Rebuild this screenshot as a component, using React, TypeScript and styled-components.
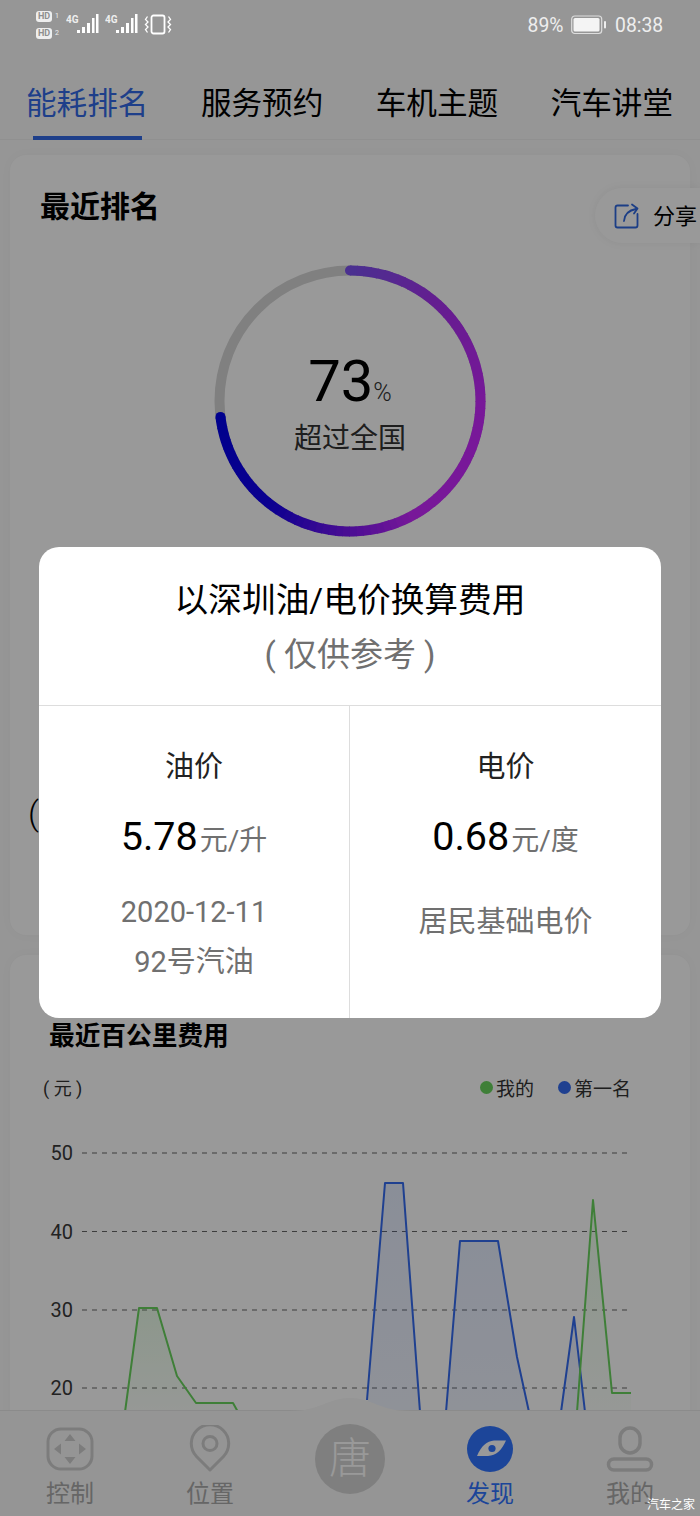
import React from 'react';
import styled, { createGlobalStyle } from 'styled-components';

const FONT = `Roboto, "Noto Sans CJK SC", sans-serif`;

const GlobalStyle = createGlobalStyle`
  html, body {
    margin: 0;
    padding: 0;
    background: #fafafa;
    font-family: ${FONT};
  }
`;

// ring colours, before the dialog backdrop darkens them
const RING_STOPS: [number, number[]][] = [
  [0, [125, 80, 240]],
  [40, [168, 50, 240]],
  [90, [200, 40, 255]],
  [150, [200, 40, 255]],
  [185, [110, 20, 245]],
  [215, [20, 0, 240]],
  [263, [0, 0, 235]],
];

function ringColor(deg: number) {
  for (let i = 1; i < RING_STOPS.length; i++) {
    const [a, ca] = RING_STOPS[i - 1];
    const [b, cb] = RING_STOPS[i];
    if (deg <= b) {
      const t = (deg - a) / (b - a);
      return `rgb(${ca.map((c, k) => Math.round(c + (cb[k] - c) * t)).join(',')})`;
    }
  }
  return 'rgb(0,0,235)';
}

function polar(deg: number) {
  const r = 130.5;
  const rad = ((deg - 90) * Math.PI) / 180;
  return `${(140 + r * Math.cos(rad)).toFixed(2)} ${(140 + r * Math.sin(rad)).toFixed(2)}`;
}

function Ring() {
  const segments = [];
  for (let d = 0; d < 263; d += 3) {
    const end = Math.min(d + 3.4, 263);
    segments.push(
      <path key={d} d={`M${polar(d)} A130.5 130.5 0 0 1 ${polar(end)}`} stroke={ringColor(d)} strokeWidth="10" fill="none" />
    );
  }
  return (
    <svg width="280" height="280" viewBox="0 0 280 280">
      <circle cx="140" cy="140" r="130.5" stroke="#d6d6d6" strokeWidth="10" fill="none" />
      {segments}
      <path d={`M${polar(0)} L${polar(0)}`} stroke={ringColor(0)} strokeWidth="10" strokeLinecap="round" />
      <path d={`M${polar(263)} L${polar(263)}`} stroke={ringColor(263)} strokeWidth="10" strokeLinecap="round" />
    </svg>
  );
}

function Signal() {
  return (
    <svg width="33" height="24" viewBox="0 0 33 24">
      <text x="0" y="10" fontSize="10" fontWeight="700" fill="#eee" fontFamily="Roboto, sans-serif">4G</text>
      <rect x="11" y="17" width="3" height="3" fill="#fff" />
      <rect x="16" y="14" width="3" height="6" fill="#fff" />
      <rect x="21" y="10" width="3" height="10" fill="#fff" />
      <rect x="26" y="5" width="2.5" height="15" fill="#fff" />
      <rect x="30" y="1" width="2.5" height="19" fill="#fff" />
    </svg>
  );
}

function Vibrate() {
  return (
    <svg width="28" height="22" viewBox="0 0 28 22" fill="none" stroke="#fff">
      <rect x="7.500" y="1.500" width="13" height="18" rx="2" strokeWidth="1.8" />
      <path d="M3.500 2.500 L1.500 5.500 L4 8 L1.500 10.500 L4 13 L1.500 15.500 L3.500 18.500" strokeWidth="1.3" />
      <path d="M24.500 2.500 L26.500 5.500 L24 8 L26.500 10.500 L24 13 L26.500 15.500 L24.500 18.500" strokeWidth="1.3" />
    </svg>
  );
}

function Battery() {
  return (
    <svg width="36" height="20" viewBox="0 0 36 20">
      <rect x="0.7" y="1" width="30" height="17.5" rx="3" fill="none" stroke="#ddd" strokeWidth="1.2" />
      <rect x="2.5" y="3" width="26" height="13.5" rx="1.5" fill="#f4f4f4" />
      <rect x="33" y="6" width="2" height="7.5" rx="1" fill="#eee" />
    </svg>
  );
}

function ShareIcon() {
  return (
    <svg width="26" height="26" viewBox="0 0 26 26" fill="none" stroke="#2f68e0" strokeWidth="1.8" strokeLinejoin="round" strokeLinecap="round">
      <path d="M14 2.500 H3.500 Q1.500 2.500 1.500 4.500 V22.500 Q1.500 24.500 3.500 24.500 H21.500 Q23.500 24.500 23.500 22.500 V11" />
      <path d="M10 18 C10.500 12 13.500 7.500 22 6" />
      <path d="M18 1.500 L23.500 5.500 L20 10.500" />
    </svg>
  );
}

function ControlIcon() {
  return (
    <svg width="48" height="44" viewBox="0 0 48 44">
      <rect x="2" y="2" width="44" height="40" rx="13" fill="none" stroke="#cfcfcf" strokeWidth="3" />
      <path d="M24 7 L29.500 14 H18.500 Z M24 37 L18.500 30 H29.500 Z M8 22 L15 16.500 V27.500 Z M40 22 L33 16.500 V27.500 Z" fill="#cfcfcf" />
    </svg>
  );
}

function PinIcon() {
  return (
    <svg width="42" height="48" viewBox="0 0 42 48" fill="none" stroke="#cfcfcf" strokeWidth="3">
      <path d="M21 45 L7.500 31.500 A18.700 18.700 0 1 1 34.500 31.500 Z" strokeLinejoin="round" />
      <circle cx="21" cy="18.500" r="7" />
    </svg>
  );
}

function DiscoverIcon() {
  return (
    <svg width="46" height="46" viewBox="0 0 46 46">
      <circle cx="23" cy="23" r="23" fill="#3074ff" />
      <path d="M10 30 C14 20 20 15 27 14.500 L39 14.500 C35 24 29 29.500 21 30 Z" fill="#fff" />
      <circle cx="25" cy="22.500" r="3.600" fill="#3074ff" />
    </svg>
  );
}

function MineIcon() {
  return (
    <svg width="48" height="46" viewBox="0 0 48 46" fill="none" stroke="#cfcfcf" strokeWidth="3.500">
      <rect x="14" y="2" width="20" height="25" rx="10" />
      <rect x="2.500" y="33" width="43" height="11" rx="5.500" />
    </svg>
  );
}

function Chart() {
  const grid = [
    { label: '50', y: 1153 },
    { label: '40', y: 1231.5 },
    { label: '30', y: 1310 },
    { label: '20', y: 1388 },
  ];
  return (
    <svg width="680" height="300" viewBox="10 1130 680 300">
      <defs>
        <linearGradient id="blueFill" x1="0" y1="0" x2="0" y2="1">
          <stop offset="0" stopColor="#346bf0" stopOpacity="0.12" />
          <stop offset="1" stopColor="#346bf0" stopOpacity="0.08" />
        </linearGradient>
        <linearGradient id="greenFill" x1="0" y1="0" x2="0" y2="1">
          <stop offset="0" stopColor="#69e661" stopOpacity="0.14" />
          <stop offset="1" stopColor="#69e661" stopOpacity="0.03" />
        </linearGradient>
      </defs>
      {grid.map(g => (
        <g key={g.label}>
          <text x="73" y={g.y + 7} textAnchor="end" fontSize="20" fill="#3a3a3a" fontFamily="Roboto, sans-serif">{g.label}</text>
          <line x1="82" x2="632" y1={g.y} y2={g.y} stroke="#666" strokeWidth="1" strokeDasharray="5 5" />
        </g>
      ))}
      <g fill="url(#blueFill)">
        <path d="M367 1412 L385 1183 H403 L420 1412 Z" />
        <path d="M446 1412 L460 1241 H498 L517 1357 L529 1412 Z" />
        <path d="M561 1412 L574 1317 L585 1412 Z" />
      </g>
      <g fill="url(#greenFill)">
        <path d="M125 1412 L139 1308 H157 L177 1376 L196 1403 H233 L238 1412 Z" />
        <path d="M577 1412 L593 1200 L612 1393 H631 V1412 Z" />
      </g>
      <g fill="none" strokeWidth="2" strokeLinejoin="round">
        <path d="M367 1400 L385 1183 H403 L420 1412 M446 1412 L460 1241 H498 L517 1357 L529 1412 M561 1412 L574 1317 L585 1412" stroke="#346bf0" />
        <path d="M125 1412 L139 1308 H157 L177 1376 L196 1403 H233 L238 1412 M577 1412 L593 1200 L612 1393 H631" stroke="#69d45e" />
      </g>
    </svg>
  );
}

export default function App() {
  return (
    <Screen>
      <GlobalStyle />
      <StatusBar>
        <StatusGroup>
          <HdStack>
            <HdRow><HdBadge>HD</HdBadge><SimNo>1</SimNo></HdRow>
            <HdRow><HdBadge>HD</HdBadge><SimNo>2</SimNo></HdRow>
          </HdStack>
          <Signal />
          <Signal />
          <Vibrate />
        </StatusGroup>
        <StatusGroup>
          <StatusText>89%</StatusText>
          <Battery />
          <StatusText>08:38</StatusText>
        </StatusGroup>
      </StatusBar>

      <Tabs>
        <Tab $active>能耗排名</Tab>
        <Tab>服务预约</Tab>
        <Tab>车机主题</Tab>
        <Tab>汽车讲堂</Tab>
      </Tabs>

      <RankCard>
        <RankTitle>最近排名</RankTitle>
        <ShareButton>
          <ShareIcon />
          <ShareLabel>分享</ShareLabel>
        </ShareButton>
        <RingWrap>
          <Ring />
          <RingCenter>
            <Percent>73<PercentSign>%</PercentSign></Percent>
            <RingLabel>超过全国</RingLabel>
          </RingCenter>
        </RingWrap>
        <HiddenParen>(</HiddenParen>
      </RankCard>

      <CostCard>
        <CostTitle>最近百公里费用</CostTitle>
        <LegendRow>
          <Unit>( 元 )</Unit>
          <Legend>
            <LegendItem><Dot $color="#69d45e" />我的</LegendItem>
            <LegendItem><Dot $color="#346bf0" />第一名</LegendItem>
          </Legend>
        </LegendRow>
        <Chart />
      </CostCard>

      <BottomNav>
        <Hump width="120" height="14" viewBox="0 0 120 14">
          <path d="M0 14 C30 14 35 2 60 1 C85 2 90 14 120 14 Z" fill="#f8f8f8" />
        </Hump>
        <NavItem><NavIcon><ControlIcon /></NavIcon><NavLabel>控制</NavLabel></NavItem>
        <NavItem><NavIcon><PinIcon /></NavIcon><NavLabel>位置</NavLabel></NavItem>
        <NavItem><CenterBadge>唐</CenterBadge></NavItem>
        <NavItem><NavIcon><DiscoverIcon /></NavIcon><NavLabel $active>发现</NavLabel></NavItem>
        <NavItem><NavIcon><MineIcon /></NavIcon><NavLabel>我的</NavLabel></NavItem>
      </BottomNav>

      <Backdrop>
        <Dialog>
          <DialogHead>
            <DialogTitle>以深圳油/电价换算费用</DialogTitle>
            <DialogNote>( 仅供参考 )</DialogNote>
          </DialogHead>
          <DialogBody>
            <PriceCol>
              <PriceName>油价</PriceName>
              <PriceValue>5.78<PriceUnit>元/升</PriceUnit></PriceValue>
              <PriceNote>2020-12-11</PriceNote>
              <PriceNote>92号汽油</PriceNote>
            </PriceCol>
            <PriceCol $divider>
              <PriceName>电价</PriceName>
              <PriceValue>0.68<PriceUnit>元/度</PriceUnit></PriceValue>
              <PriceNote $offset>居民基础电价</PriceNote>
            </PriceCol>
          </DialogBody>
        </Dialog>
      </Backdrop>

      <Watermark>汽车之家</Watermark>
    </Screen>
  );
}

const Screen = styled.div`
  position: relative;
  width: 700px;
  height: 1516px;
  overflow: hidden;
  background: #fafafa;
  font-family: ${FONT};
`;

const StatusBar = styled.div`
  position: relative;
  z-index: 6;
  height: 50px;
  padding: 0 35px 0 36px;
  display: flex;
  justify-content: space-between;
  align-items: center;
  box-sizing: border-box;
  color: #eee;
`;

const StatusGroup = styled.div`
  display: flex;
  align-items: center;
  gap: 6px;
`;

const HdStack = styled.div`
  display: flex;
  flex-direction: column;
  gap: 6px;
  margin-right: 1px;
`;

const HdRow = styled.div`
  display: flex;
  align-items: center;
  gap: 3px;
`;

const HdBadge = styled.span`
  width: 16px;
  height: 11px;
  border-radius: 3px;
  background: #eee;
  color: #8f8f8f;
  font-size: 9px;
  font-weight: 700;
  line-height: 11px;
  text-align: center;
`;

const SimNo = styled.span`
  font-size: 7px;
  line-height: 11px;
  color: #eee;
`;

const StatusText = styled.span`
  font-size: 21px;
  line-height: 24px;
  color: #eee;
  transform: scaleX(0.92);
`;

const Tabs = styled.div`
  height: 90px;
  padding-left: 26px;
  display: flex;
  gap: 52.5px;
  background: #fafafa;
  border-bottom: 1px solid #f0f0f0;
  box-sizing: border-box;
`;

const Tab = styled.div<{ $active?: boolean }>`
  position: relative;
  font-size: 30.6px;
  line-height: 108px;
  height: 90px;
  white-space: nowrap;
  color: ${p => (p.$active ? '#3369e6' : '#000')};

  &::after {
    content: '';
    display: ${p => (p.$active ? 'block' : 'none')};
    position: absolute;
    left: 7px;
    right: 6px;
    bottom: 0;
    height: 4px;
    background: #3369e6;
  }
`;

const RankCard = styled.section`
  position: relative;
  height: 780px;
  margin: 15px 10px 0;
  padding: 36px 0 0 20px;
  box-sizing: border-box;
  border-radius: 16px;
  background: #fff;
  box-shadow: 0 0 12px rgba(0, 0, 0, 0.03);
`;

const RankTitle = styled.h2`
  margin: 0 0 0 10px;
  font-size: 30px;
  line-height: 32px;
  font-weight: 700;
  color: #000;
`;

const ShareButton = styled.div`
  position: absolute;
  top: 33px;
  right: -10px;
  width: 105px;
  height: 55px;
  padding-left: 19px;
  box-sizing: border-box;
  display: flex;
  align-items: center;
  gap: 13px;
  border-radius: 28px 0 0 28px;
  background: #fff;
  box-shadow: 0 0 10px rgba(0, 0, 0, 0.06);
`;

const ShareLabel = styled.span`
  margin-bottom: 3px;
  font-size: 22px;
  color: #000;
  white-space: nowrap;
`;

const RingWrap = styled.div`
  position: relative;
  width: 280px;
  height: 280px;
  margin: 38px 0 0 180px;
`;

const RingCenter = styled.div`
  position: absolute;
  inset: 0;
  padding-top: 88px;
  box-sizing: border-box;
  display: flex;
  flex-direction: column;
  align-items: center;
`;

const Percent = styled.div`
  font-size: 58px;
  line-height: 64px;
  font-weight: 400;
  color: #000;
`;

const PercentSign = styled.span`
  font-size: 25px;
  font-weight: 300;
  color: #333;
`;

const RingLabel = styled.div`
  margin-top: -6px;
  font-size: 28px;
  line-height: 40px;
  color: #333;
`;

const HiddenParen = styled.div`
  margin: 250px 0 0 -2px;
  font-size: 34px;
  font-weight: 300;
  line-height: 44px;
  color: #000;
`;

const CostCard = styled.section`
  height: 600px;
  margin: 20px 10px 0;
  padding-top: 66px;
  box-sizing: border-box;
  border-radius: 16px;
  background: #fff;
  box-shadow: 0 0 12px rgba(0, 0, 0, 0.03);
`;

const CostTitle = styled.h2`
  margin: 0 0 0 39px;
  font-size: 25.7px;
  line-height: 30px;
  font-weight: 700;
  color: #000;
`;

const LegendRow = styled.div`
  height: 24px;
  margin: 24px 59px 31px 33px;
  display: flex;
  justify-content: space-between;
  align-items: center;
`;

const Unit = styled.span`
  font-size: 18px;
  white-space: pre;
  color: #333;
`;

const Legend = styled.div`
  display: flex;
  gap: 24px;
`;

const LegendItem = styled.div`
  display: flex;
  align-items: center;
  gap: 3px;
  font-size: 19px;
  color: #333;
`;

const Dot = styled.span<{ $color: string }>`
  width: 13px;
  height: 13px;
  border-radius: 50%;
  background: ${p => p.$color};
`;

const BottomNav = styled.nav`
  position: absolute;
  left: 0;
  right: 0;
  bottom: 0;
  height: 105px;
  display: grid;
  grid-template-columns: repeat(5, 140px);
  background: #f8f8f8;
  box-shadow: 0 -1px 0 #e8e8e8;
`;

const Hump = styled.svg`
  position: absolute;
  top: -14px;
  left: 290px;
`;

const NavItem = styled.div`
  position: relative;
  display: flex;
  flex-direction: column;
  align-items: center;
  padding-top: 13px;
`;

const NavIcon = styled.div`
  height: 50px;
  display: flex;
  align-items: center;
  justify-content: center;
`;

const NavLabel = styled.span<{ $active?: boolean }>`
  margin-top: 5px;
  font-size: 24px;
  line-height: 30px;
  color: ${p => (p.$active ? '#3074ff' : '#aaa')};
`;

const CenterBadge = styled.div`
  width: 70px;
  height: 70px;
  border-radius: 50%;
  background: #d4d4d4;
  color: #fff;
  font-size: 42px;
  font-weight: 300;
  line-height: 70px;
  text-align: center;
`;

const Backdrop = styled.div`
  position: absolute;
  inset: 0;
  z-index: 5;
  padding-top: 547px;
  box-sizing: border-box;
  display: flex;
  justify-content: center;
  align-items: flex-start;
  background: rgba(0, 0, 0, 0.4);
`;

const Dialog = styled.div`
  width: 622px;
  height: 471px;
  border-radius: 20px;
  background: #fff;
  overflow: hidden;
  display: flex;
  flex-direction: column;
`;

const DialogHead = styled.div`
  height: 159px;
  padding-top: 31px;
  box-sizing: border-box;
  border-bottom: 1px solid #ddd;
  text-align: center;
`;

const DialogTitle = styled.div`
  font-size: 33.7px;
  line-height: 46px;
  color: #000;
`;

const DialogNote = styled.div`
  margin-top: 9px;
  font-size: 33px;
  line-height: 44px;
  color: #707070;
`;

const DialogBody = styled.div`
  flex: 1;
  display: grid;
  grid-template-columns: 310px 1fr;
`;

const PriceCol = styled.div<{ $divider?: boolean }>`
  display: flex;
  flex-direction: column;
  align-items: center;
  padding-top: 41px;
  border-left: ${p => (p.$divider ? '1px solid #ddd' : 'none')};
`;

const PriceName = styled.div`
  font-size: 29px;
  line-height: 40px;
  color: #222;
`;

const PriceValue = styled.div`
  margin-top: 26px;
  font-size: 39.5px;
  line-height: 48px;
  color: #000;
`;

const PriceUnit = styled.span`
  margin-left: 2px;
  font-size: 28px;
  color: #707070;
`;

const PriceNote = styled.div<{ $offset?: boolean }>`
  font-size: 29px;
  line-height: 50px;
  color: #707070;

  ${PriceValue} + & {
    margin-top: ${p => (p.$offset ? '32px' : '22px')};
  }
`;

const Watermark = styled.div`
  position: absolute;
  z-index: 8;
  right: 5px;
  bottom: 3px;
  font-size: 12px;
  line-height: 16px;
  color: #fff;
`;
